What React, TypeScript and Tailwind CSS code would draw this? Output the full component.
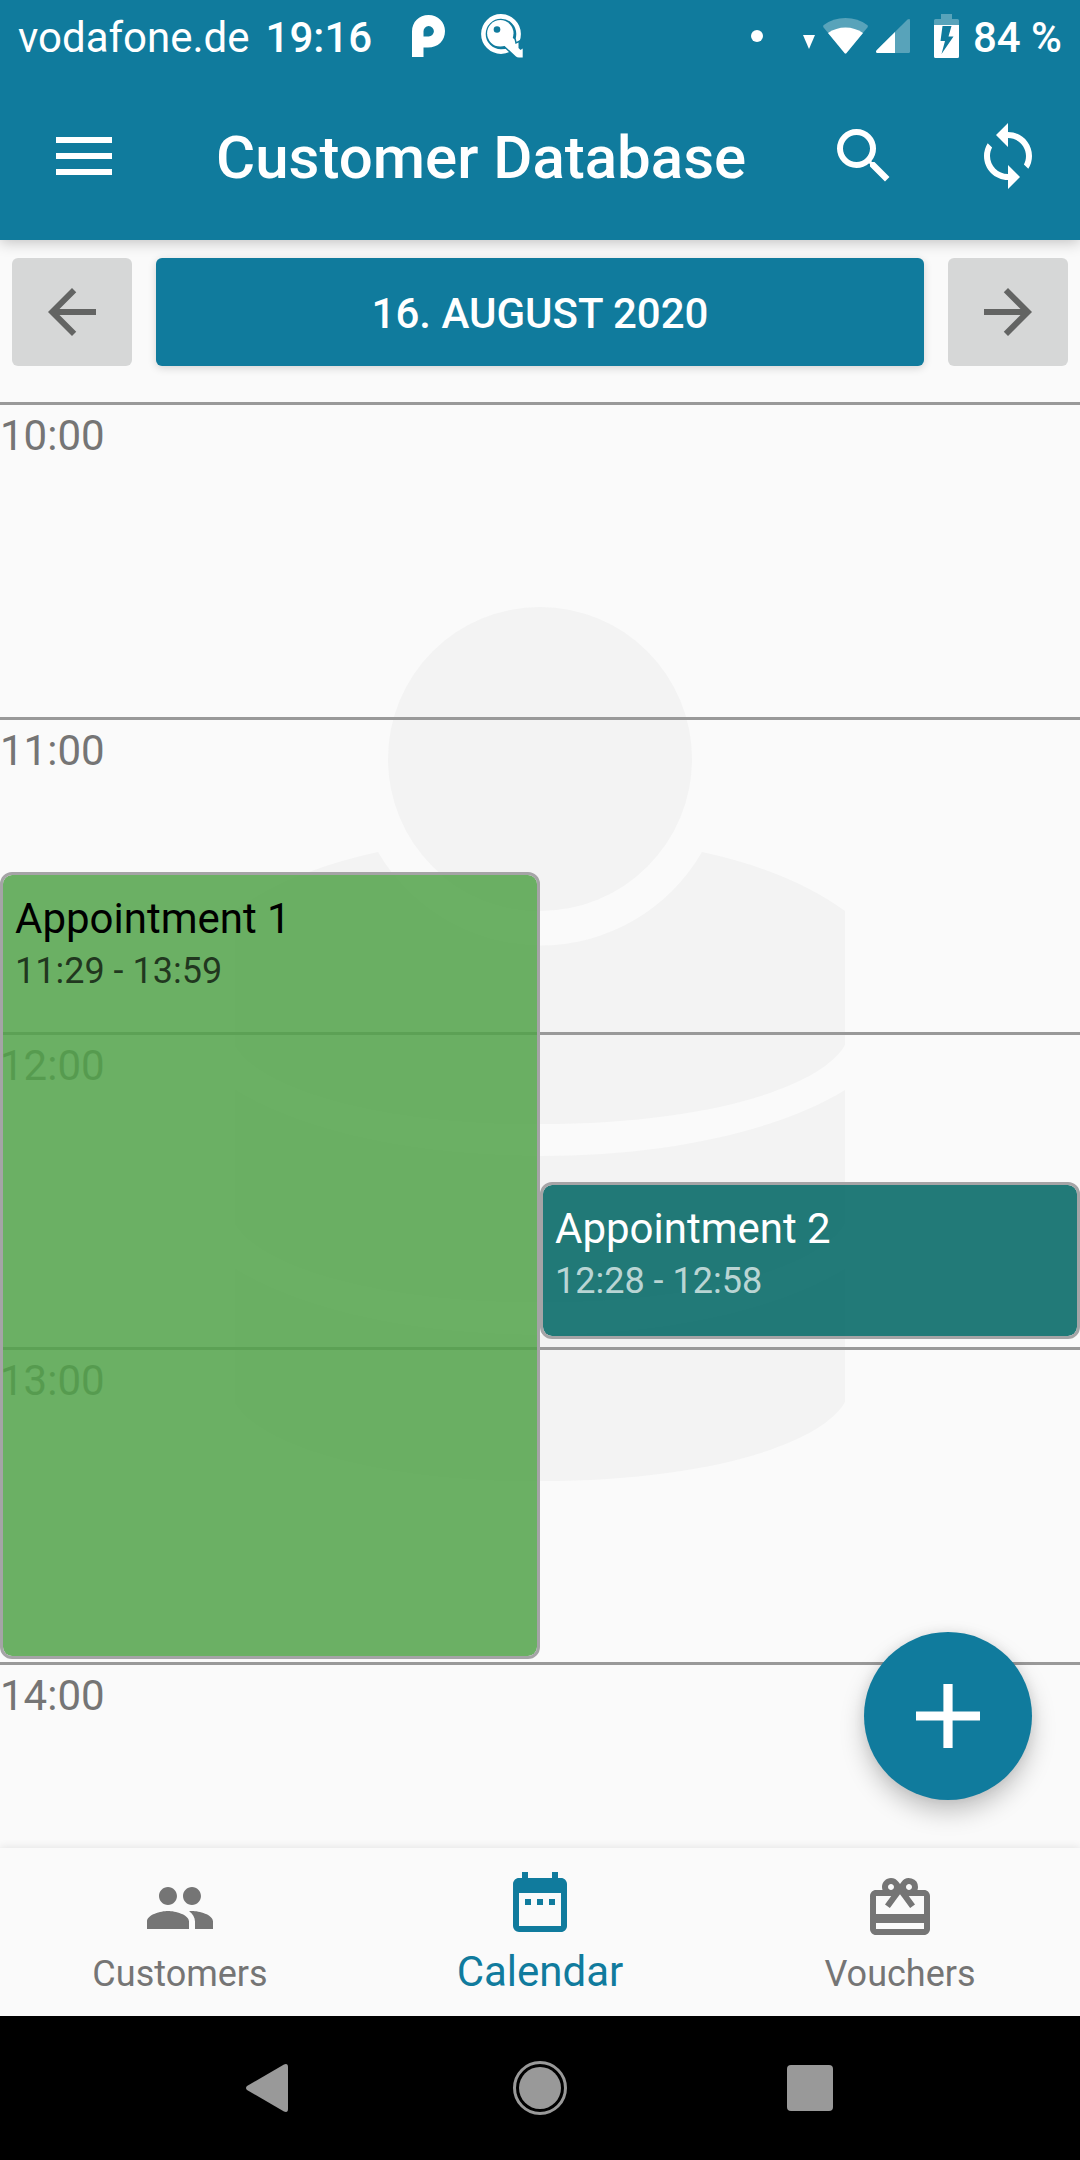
import clsx from "clsx";
import type { CSSProperties, ReactNode } from "react";
import {
  MdArrowBack,
  MdArrowForward,
  MdCardGiftcard,
  MdDateRange,
  MdPeople,
  MdSearch,
  MdSync,
} from "react-icons/md";

interface Appointment {
  id: number;
  title: string;
  from: string;
  to: string;
  column: number;
  className: string;
  timeClassName: string;
}

const HOUR_HEIGHT = 315;
const LINE_HEIGHT = 3;
const FIRST_HOUR = 10;
const COLUMNS = 2;

const hours = [10, 11, 12, 13, 14];

const appointments: Appointment[] = [
  {
    id: 1,
    title: "Appointment 1",
    from: "11:29",
    to: "13:59",
    column: 0,
    className: "bg-[#51a249]/85 text-black",
    timeClassName: "text-black/70",
  },
  {
    id: 2,
    title: "Appointment 2",
    from: "12:28",
    to: "12:58",
    column: 1,
    className: "bg-[#016664]/87 text-white",
    timeClassName: "text-white/70",
  },
];

const toMinutes = (time: string) => {
  const [h, m] = time.split(":").map(Number);
  return (h - FIRST_HOUR) * 60 + m;
};

const getPlacement = (appointment: Appointment): CSSProperties => {
  const start = toMinutes(appointment.from);
  const end = toMinutes(appointment.to);
  return {
    top: Math.round((start * HOUR_HEIGHT) / 60) + LINE_HEIGHT,
    height: Math.floor(((end - start) * HOUR_HEIGHT) / 60),
    left: `${(appointment.column * 100) / COLUMNS}%`,
    width: `${100 / COLUMNS}%`,
  };
};

const ParkingLogo = () => (
  <svg className="h-[42px] w-[33px]" viewBox="0 0 33 42" fill="#fff">
    <path
      fillRule="evenodd"
      d="M0 42V16.5C0 7 7 0 16.5 0S33 7 33 16C33 26 26 32.500 16 32.500H11.500V42ZM11.500 21.500V16.500A5.200 5.200 0 1 1 16.500 21.500Z"
    />
  </svg>
);

const KeyLogo = () => (
  <svg className="h-[44px] w-[44px]" viewBox="0 0 44 44">
    <circle cx="20" cy="20" r="17.600" fill="none" stroke="#fff" strokeWidth="4.600" />
    <path
      d="M22 30.500L35 42.500Q36 43.500 38 43.500H41.700V34.500L39.500 36 37.500 34V28.500L34.500 30 33.500 25.500 30 22Z"
      fill="#fff"
      stroke="#107b9d"
      strokeWidth="3"
      paintOrder="stroke"
    />
    <circle cx="19.300" cy="19.300" r="13.200" fill="#fff" />
    <circle cx="16" cy="15.500" r="3.300" fill="#107b9d" />
  </svg>
);

const WifiIcon = () => (
  <svg className="h-[36px] w-[45px]" viewBox="0 0 45 36" fill="#fff">
    <path opacity=".3" d="M.6 9.500Q-.4 8 .8 7 10 0 22.500 0t21.700 7q1.200 1 .2 2.500L23.500 35q-1 1.200-2 0z" />
    <path d="M5 15Q13 9.500 22.500 9.500T40 15L23.500 35q-1 1.200-2 0z" />
  </svg>
);

const SignalIcon = () => (
  <svg className="h-[34px] w-[34px]" viewBox="0 0 34 34" fill="#fff">
    <path opacity=".3" d="M1 34Q-.8 33 .6 31.200L31.500.6Q34-.8 34 1.500V32.500q0 1.500-1.500 1.500z" />
    <path d="M1 34Q-.8 33 .6 31.200L19 13V34z" />
  </svg>
);

const BatteryIcon = () => (
  <svg className="h-[44px] w-[25px]" viewBox="0 0 25 44" fill="#fff">
    <path opacity=".3" d="M7 0h11v5h5.500Q25 5 25 6.500V11H0V6.500Q0 5 1.500 5H7z" />
    <path
      fillRule="evenodd"
      d="M0 11h25v31.500q0 1.500-1.500 1.500h-22Q0 44 0 42.500zM8.500 12L6.500 27h4.500L7.500 40 19.500 22.500h-5L17.500 12z"
    />
  </svg>
);

// Person standing on a three part database cylinder
const Watermark = () => (
  <svg
    className="h-[874px] w-[610px]"
    viewBox="235 607 610 874"
    fill="#f3f3f3"
    aria-hidden="true"
  >
    <circle cx="540" cy="759" r="152" />
    <path d="M702 852Q790 871 845 911V1045C822 1086 710 1124 540 1124S258 1086 235 1045V911Q290 871 378 852A187 187 0 0 0 702 852Z" />
    <path d="M235 1090C300 1130 410 1156 540 1156S780 1130 845 1090V1223C822 1264 710 1302 540 1302S258 1264 235 1223Z" />
    <path d="M235 1269C300 1309 410 1335 540 1335S780 1309 845 1269V1402C822 1443 710 1481 540 1481S258 1443 235 1402Z" />
  </svg>
);

const StatusBar = () => (
  <div className="flex h-[72px] items-center justify-between px-[18px] text-[42px] leading-[48px] text-white">
    <div className="flex items-center">
      <span className="pt-1">vodafone.de</span>
      <span className="ml-4 pt-1 font-medium">19:16</span>
      <div className="ml-10 flex items-center gap-9">
        <ParkingLogo />
        <KeyLogo />
      </div>
    </div>
    <div className="flex items-center">
      <span className="mr-10 size-3 rounded-full bg-white" />
      <svg className="mt-3 mr-2 h-[14px] w-[12px]" viewBox="0 0 12 14" fill="#fff">
        <path d="M0 0h12L6 14z" />
      </svg>
      <WifiIcon />
      <span className="ml-2">
        <SignalIcon />
      </span>
      <span className="ml-6">
        <BatteryIcon />
      </span>
      <span className="ml-3.5 pt-1 font-medium">84 %</span>
    </div>
  </div>
);

const AppBar = () => (
  <div className="flex h-[168px] items-center text-white">
    <button
      type="button"
      aria-label="Menu"
      className="flex h-full w-[168px] flex-col items-center justify-center gap-[10px]"
    >
      <span className="h-[6px] w-[56px] bg-white" />
      <span className="h-[6px] w-[56px] bg-white" />
      <span className="h-[6px] w-[56px] bg-white" />
    </button>
    <h1 className="flex-1 pt-1 pl-12 text-[60px] leading-[72px] font-medium">
      Customer Database
    </h1>
    <button
      type="button"
      aria-label="Search"
      className="flex size-36 items-center justify-center"
    >
      <MdSearch className="size-[72px]" />
    </button>
    <button
      type="button"
      aria-label="Synchronize"
      className="flex size-36 items-center justify-center"
    >
      <MdSync className="size-[72px]" />
    </button>
  </div>
);

const DayButton = ({ label, children }: { label: string; children: ReactNode }) => (
  <button
    type="button"
    aria-label={label}
    className="flex w-[120px] items-center justify-center rounded-[6px] bg-[#d6d7d7] text-[#636463]"
  >
    {children}
  </button>
);

const DateNavigation = () => (
  <div className="flex h-[144px] shrink-0 gap-6 px-3 py-[18px]">
    <DayButton label="Previous day">
      <MdArrowBack className="size-[72px]" />
    </DayButton>
    <button
      type="button"
      className="flex-1 rounded-[6px] bg-[#107b9d] pt-1 text-[42px] leading-[48px] font-medium text-white uppercase shadow-[0_2px_8px_rgba(0,0,0,0.16)]"
    >
      16. August 2020
    </button>
    <DayButton label="Next day">
      <MdArrowForward className="size-[72px]" />
    </DayButton>
  </div>
);

const DayView = () => (
  <div className="min-h-0 flex-1 overflow-hidden pt-[18px]">
    <div className="relative">
      {hours.map((hour) => (
        <div
          key={hour}
          className="h-[315px] border-t-3 border-[#999] pt-[7px] text-[42px] leading-[48px] text-[#757575]"
        >
          {hour}:00
        </div>
      ))}
      {appointments.map((appointment) => (
        <article
          key={appointment.id}
          className={clsx(
            "absolute rounded-[12px] border-3 border-[#a5a4a6] bg-clip-padding px-3 pt-4",
            appointment.className,
          )}
          style={getPlacement(appointment)}
        >
          <h2 className="text-[42px] leading-[56px]">{appointment.title}</h2>
          <p className={clsx("text-[36px] leading-[48px]", appointment.timeClassName)}>
            {appointment.from} - {appointment.to}
          </p>
        </article>
      ))}
    </div>
  </div>
);

const TabBar = () => (
  <nav className="z-10 grid h-[168px] shrink-0 grid-cols-3 bg-[#fafafa] text-[36px] leading-[48px] text-[#757575] shadow-[0_-1px_8px_rgba(0,0,0,0.09)]">
    <a href="#customers" className="flex flex-col items-center justify-between pt-6 pb-[18px]">
      <MdPeople className="size-[72px]" />
      Customers
    </a>
    <a
      href="#calendar"
      aria-current="page"
      className="flex flex-col items-center justify-between pt-[18px] pb-5 text-[42px] text-[#107b9d]"
    >
      <MdDateRange className="size-[72px]" />
      Calendar
    </a>
    <a href="#vouchers" className="flex flex-col items-center justify-between pt-6 pb-[18px]">
      <MdCardGiftcard className="size-[72px]" />
      Vouchers
    </a>
  </nav>
);

const SystemNavigation = () => (
  <div className="grid h-36 shrink-0 grid-cols-3 bg-black px-[12.5%]">
    <button type="button" aria-label="Back" className="flex items-center justify-center">
      <svg className="mr-1.5 h-[48px] w-[42px]" viewBox="0 0 42 48" fill="#999">
        <path d="M38 .5Q42-1 42 3V45q0 4-4 2.500L1 26q-2-2 0-4z" />
      </svg>
    </button>
    <button type="button" aria-label="Home" className="flex items-center justify-center">
      <span className="size-[54px] rounded-full border-3 border-[#999] p-[3px]">
        <span className="block size-full rounded-full bg-[#999]" />
      </span>
    </button>
    <button type="button" aria-label="Recent apps" className="flex items-center justify-center">
      <span className="size-[46px] rounded-[4px] bg-[#999]" />
    </button>
  </div>
);

export default function App() {
  return (
    <div className="flex h-screen flex-col bg-[#fafafa] font-['Roboto',sans-serif]">
      <header className="z-10 shrink-0 bg-[#107b9d] shadow-[0_2px_14px_rgba(0,0,0,0.24)]">
        <StatusBar />
        <AppBar />
      </header>
      <main className="relative flex min-h-0 flex-1 flex-col">
        <div className="absolute inset-0 flex items-center justify-center">
          <Watermark />
        </div>
        <div className="relative flex min-h-0 flex-1 flex-col">
          <DateNavigation />
          <DayView />
        </div>
        <button
          type="button"
          aria-label="New appointment"
          className="absolute right-12 bottom-12 flex size-[168px] items-center justify-center rounded-full bg-[#107b9d] shadow-[0_12px_24px_rgba(0,0,0,0.22),0_0_12px_rgba(0,0,0,0.08)]"
        >
          <svg className="size-16" viewBox="0 0 64 64" fill="#fff">
            <path d="M27.400 0h9.200v27.400H64v9.200H36.600V64h-9.200V36.600H0v-9.200h27.400z" />
          </svg>
        </button>
      </main>
      <TabBar />
      <SystemNavigation />
    </div>
  );
}
